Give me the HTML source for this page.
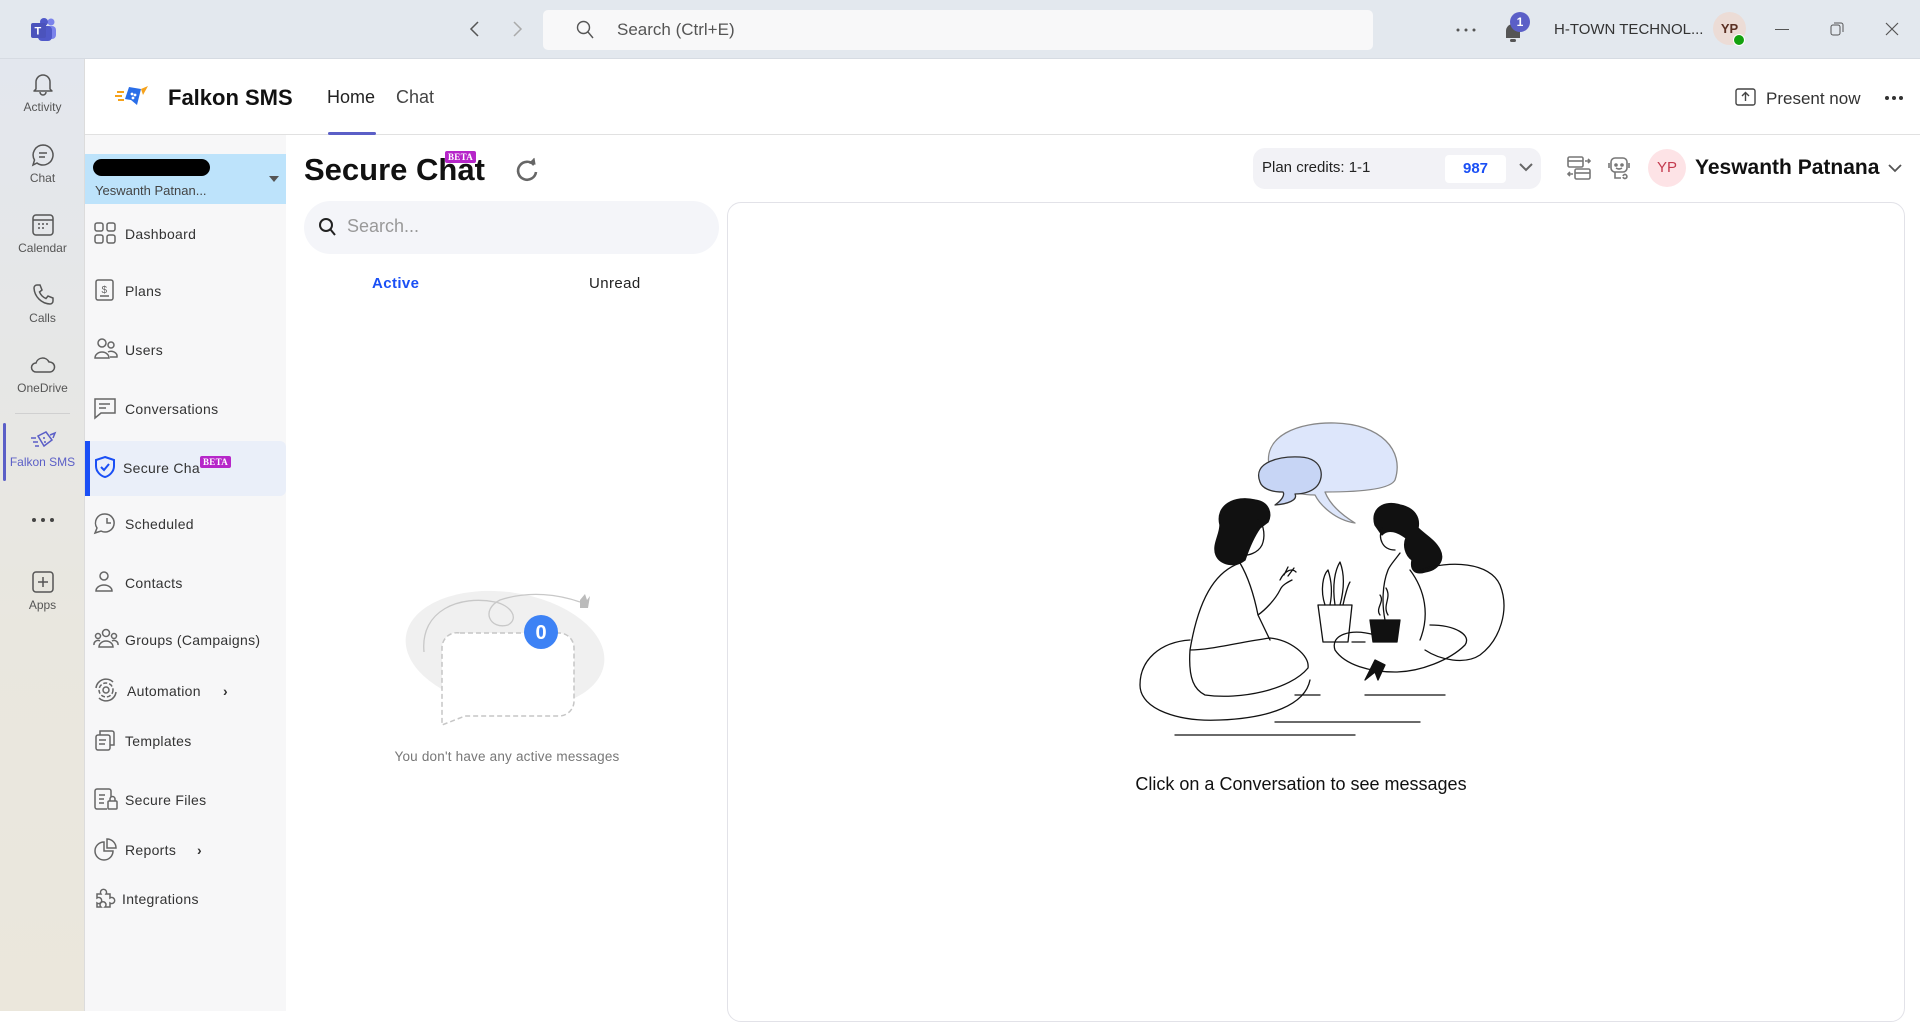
<!DOCTYPE html>
<html><head><meta charset="utf-8">
<style>
*{box-sizing:border-box;margin:0;padding:0}
body{width:1920px;height:1011px;overflow:hidden;font-family:"Liberation Sans",sans-serif;background:#fff;position:relative;color:#222}
.abs{position:absolute}
#top{left:0;top:0;width:1920px;height:59px;background:#e3e8ee;border-bottom:1px solid #d6dbe2}
#rail{left:0;top:59px;width:85px;height:952px;background:linear-gradient(#e3e7ee,#e9e7df 60%,#ebe7dc);border-right:1px solid #dcdcdc}
.ri{position:absolute;left:0;width:85px;text-align:center;font-size:12px;color:#555}
.ri svg{display:block;margin:0 auto 3px}
#hdr{left:85px;top:59px;width:1835px;height:76px;background:#fff;border-bottom:1px solid #e1e1e1}
#side{left:85px;top:135px;width:201px;height:876px;background:#f7f7f8}
.mi{position:absolute;left:0;width:201px;height:30px;font-size:14px;color:#333;letter-spacing:.3px}
.mi svg{position:absolute;left:8px;top:2px}
.mi span{position:absolute;left:40px;top:7px}
#panel{left:727px;top:202px;width:1178px;height:820px;border:1px solid #e2e2e8;border-radius:14px;background:#fff}
.beta{background:#b626c9;color:#fff;font-family:"Liberation Serif",serif;font-weight:bold;font-size:9px;border-radius:2px;padding:1px 3px;letter-spacing:.3px}
</style></head><body>

<div id="top" class="abs">
  <svg class="abs" style="left:30px;top:17px" width="28" height="26" viewBox="0 0 28 26"><circle cx="21" cy="5" r="3.5" fill="#7b83eb"/><rect x="14" y="9" width="12" height="13" rx="4" fill="#7b83eb"/><circle cx="14" cy="5" r="4" fill="#5059c9"/><rect x="8" y="9" width="14" height="15" rx="4" fill="#5059c9"/><rect x="1" y="6" width="15" height="15" rx="2" fill="#4b53bc"/><text x="4.5" y="17.5" font-size="11" font-weight="bold" fill="#fff" font-family="Liberation Sans">T</text></svg>
  <svg class="abs" style="left:468px;top:20px" width="14" height="18"><path d="M10 2 L3 9 L10 16" stroke="#555" stroke-width="1.5" fill="none"/></svg>
  <svg class="abs" style="left:510px;top:20px" width="14" height="18"><path d="M4 2 L11 9 L4 16" stroke="#aaa" stroke-width="1.5" fill="none"/></svg>
  <div class="abs" style="left:543px;top:10px;width:830px;height:40px;background:#f8f8f9;border-radius:5px"></div>
  <svg class="abs" style="left:576px;top:20px" width="18" height="20"><circle cx="7.5" cy="7.5" r="6" stroke="#555" stroke-width="1.4" fill="none"/><path d="M12 12 L17 18" stroke="#555" stroke-width="1.4"/></svg>
  <div class="abs" style="left:617px;top:20px;font-size:17px;color:#555">Search (Ctrl+E)</div>
  <svg class="abs" style="left:1455px;top:27px" width="22" height="6"><circle cx="3" cy="3" r="1.5" fill="#555"/><circle cx="11" cy="3" r="1.5" fill="#555"/><circle cx="19" cy="3" r="1.5" fill="#555"/></svg>
  <svg class="abs" style="left:1502px;top:20px" width="22" height="24"><path d="M4 18 L4 11 A7 7 0 0 1 18 11 L18 18 Z" fill="#555"/><rect x="8" y="19" width="6" height="3" rx="1.5" fill="#555"/></svg>
  <div class="abs" style="left:1510px;top:12px;width:20px;height:20px;border-radius:50%;background:#5b5fc7;color:#fff;font-size:12px;font-weight:bold;text-align:center;line-height:20px">1</div>
  <div class="abs" style="left:1554px;top:21px;font-size:15px;color:#333">H-TOWN TECHNOL...</div>
  <div class="abs" style="left:1713px;top:12px;width:33px;height:33px;border-radius:50%;background:#ecdcd6;color:#5a2f22;font-size:13px;font-weight:bold;text-align:center;line-height:33px">YP</div>
  <div class="abs" style="left:1733px;top:34px;width:12px;height:12px;border-radius:50%;background:#13a10e;border:1.5px solid #fff"></div>
  <div class="abs" style="left:1775px;top:29px;width:14px;height:1px;background:#555"></div>
  <svg class="abs" style="left:1830px;top:22px" width="14" height="14"><rect x="1" y="3" width="9" height="10" rx="2" stroke="#555" fill="none"/><path d="M4 1 H11 A2 2 0 0 1 13 3 V10" stroke="#555" fill="none"/></svg>
  <svg class="abs" style="left:1885px;top:22px" width="14" height="14"><path d="M1 1 L13 13 M13 1 L1 13" stroke="#555" stroke-width="1.2"/></svg>
</div>

<div id="rail" class="abs">
  <div class="ri" style="top:12px"><svg width="26" height="26" viewBox="0 0 26 26"><path d="M6 18 V11 A7 7 0 0 1 20 11 V18 L22 20 H4 Z" stroke="#555" stroke-width="1.5" fill="none" stroke-linejoin="round"/><path d="M10 21 A3 3 0 0 0 16 21" stroke="#555" stroke-width="1.5" fill="none"/></svg>Activity</div>
  <div class="ri" style="top:83px"><svg width="26" height="26" viewBox="0 0 26 26"><path d="M13 3 A10 10 0 1 1 7 21 L3 23 L4.5 18 A10 10 0 0 1 13 3 Z" stroke="#555" stroke-width="1.5" fill="none"/><path d="M9 11 H17 M9 15 H15" stroke="#555" stroke-width="1.5"/></svg>Chat</div>
  <div class="ri" style="top:153px"><svg width="26" height="26" viewBox="0 0 26 26"><rect x="3" y="3" width="20" height="20" rx="3" stroke="#555" stroke-width="1.5" fill="none"/><path d="M3 8 H23" stroke="#555" stroke-width="1.5"/><g fill="#555"><circle cx="9" cy="12" r="1"/><circle cx="13" cy="12" r="1"/><circle cx="17" cy="12" r="1"/><circle cx="9" cy="16" r="1"/><circle cx="13" cy="16" r="1"/></g></svg>Calendar</div>
  <div class="ri" style="top:223px"><svg width="26" height="26" viewBox="0 0 26 26"><path d="M7 3 L10 3 L12 8 L9.5 10 A12 12 0 0 0 16 16.5 L18 14 L23 16 L23 19 A3 3 0 0 1 20 22 A17 17 0 0 1 4 6 A3 3 0 0 1 7 3 Z" stroke="#555" stroke-width="1.5" fill="none"/></svg>Calls</div>
  <div class="ri" style="top:293px"><svg width="26" height="26" viewBox="0 0 26 26"><path d="M6 20 A4.5 4.5 0 0 1 6 11 A7 7 0 0 1 19 10 A5 5 0 0 1 20 20 Z" stroke="#555" stroke-width="1.5" fill="none"/></svg>OneDrive</div>
  <div class="abs" style="left:15px;top:354px;width:55px;height:1px;background:#d0d0d0"></div>
  <div class="abs" style="left:3px;top:364px;width:3px;height:58px;background:#5b5fc7;border-radius:2px"></div>
  <div class="ri" style="top:369px;color:#5b5fc7"><svg width="28" height="24" viewBox="0 0 28 24"><path d="M9 8 L17 4 L23 12 L15 18 Z" stroke="#5b5fc7" stroke-width="1.5" fill="none"/><path d="M21 7 L26 5 L24 10" stroke="#5b5fc7" stroke-width="1.5" fill="none"/><path d="M2 10 H7 M4 14 H9 M6 18 H10" stroke="#5b5fc7" stroke-width="1.5"/><circle cx="15" cy="10" r="1" fill="#5b5fc7"/><circle cx="16" cy="14" r="1" fill="#5b5fc7"/></svg>Falkon SMS</div>
  <svg class="abs" style="left:31px;top:458px" width="24" height="6"><circle cx="3" cy="3" r="2" fill="#444"/><circle cx="12" cy="3" r="2" fill="#444"/><circle cx="21" cy="3" r="2" fill="#444"/></svg>
  <div class="ri" style="top:510px"><svg width="26" height="26" viewBox="0 0 26 26"><rect x="3" y="3" width="20" height="20" rx="3" stroke="#555" stroke-width="1.5" fill="none"/><path d="M13 8 V18 M8 13 H18" stroke="#555" stroke-width="1.5"/></svg>Apps</div>
</div>

<div id="hdr" class="abs">
  <svg class="abs" style="left:30px;top:24px" width="36" height="26" viewBox="0 0 36 26"><path d="M14 4 L26 6 L22 22 L16 17 L10 16 Z" fill="#2a6ee8"/><path d="M26 6 L33 3 L28 12 Z" fill="#f6a21b"/><path d="M2 9 H9 M0 13 H7 M3 17 H9" stroke="#f6a21b" stroke-width="2"/><circle cx="17" cy="11" r="1.4" fill="#fff"/><circle cx="20" cy="12" r="1.4" fill="#fff"/><circle cx="18" cy="15" r="1.4" fill="#fff"/></svg>
  <div class="abs" style="left:83px;top:26px;font-size:22px;font-weight:bold;color:#111">Falkon SMS</div>
  <div class="abs" style="left:242px;top:28px;font-size:18px;color:#222">Home</div>
  <div class="abs" style="left:243px;top:73px;width:48px;height:3px;background:#5b5fc7;border-radius:2px"></div>
  <div class="abs" style="left:311px;top:28px;font-size:18px;color:#444">Chat</div>
  <svg class="abs" style="left:1650px;top:29px" width="22" height="20"><rect x="1" y="1" width="19" height="16" rx="2" stroke="#444" stroke-width="1.4" fill="none"/><path d="M10.5 13 V5 M7 8 L10.5 4.5 L14 8" stroke="#444" stroke-width="1.4" fill="none"/></svg>
  <div class="abs" style="left:1681px;top:30px;font-size:17px;color:#333">Present now</div>
  <svg class="abs" style="left:1799px;top:36px" width="20" height="6"><circle cx="3" cy="3" r="2" fill="#333"/><circle cx="10" cy="3" r="2" fill="#333"/><circle cx="17" cy="3" r="2" fill="#333"/></svg>
</div>

<div id="side" class="abs">
  <div class="abs" style="left:0;top:19px;width:201px;height:50px;background:#bde3fb"></div>
  <div class="abs" style="left:8px;top:24px;width:117px;height:17px;background:#000;border-radius:9px"></div>
  <div class="abs" style="left:10px;top:48px;font-size:13px;color:#444">Yeswanth Patnan...</div>
  <div class="abs" style="left:184px;top:41px;width:0;height:0;border-left:5px solid transparent;border-right:5px solid transparent;border-top:6px solid #555"></div>

  <div class="mi" style="top:84px"><svg width="24" height="24" viewBox="0 0 24 24" fill="none" stroke="#666" stroke-width="1.5"><rect x="2" y="2" width="8" height="8" rx="2"/><rect x="14" y="2" width="8" height="8" rx="2"/><rect x="2" y="14" width="8" height="8" rx="2"/><rect x="14" y="14" width="8" height="8" rx="2"/></svg><span>Dashboard</span></div>
  <div class="mi" style="top:141px"><svg width="24" height="24" viewBox="0 0 24 24" fill="none" stroke="#666" stroke-width="1.5"><rect x="3" y="2" width="17" height="20" rx="2"/><text x="8.5" y="15" font-size="10" fill="#666" stroke="none">$</text><path d="M7 18 H16"/></svg><span>Plans</span></div>
  <div class="mi" style="top:200px"><svg width="26" height="24" viewBox="0 0 26 24" fill="none" stroke="#666" stroke-width="1.5"><circle cx="9" cy="6" r="4"/><path d="M2 21 A7 6 0 0 1 16 21 Z"/><circle cx="18" cy="8" r="3"/><path d="M15 15 A6 5 0 0 1 24 20 H17"/></svg><span>Users</span></div>
  <div class="mi" style="top:259px"><svg width="24" height="24" viewBox="0 0 24 24" fill="none" stroke="#666" stroke-width="1.5"><path d="M2 3 H22 V17 H8 L2 22 Z"/><path d="M6 8 H17 M6 12 H13"/></svg><span>Conversations</span></div>
  <div class="abs" style="left:0;top:306px;width:201px;height:55px;background:#eaeff9;border-radius:0 6px 6px 0"></div>
  <div class="abs" style="left:0;top:306px;width:5px;height:55px;background:#1a4ff5"></div>
  <div class="mi" style="top:318px"><svg width="24" height="24" viewBox="0 0 24 24" fill="none" stroke="#1a4ff5" stroke-width="2"><path d="M12 2 L21 5 V11 C21 17 16 21 12 22 C8 21 3 17 3 11 V5 Z"/><path d="M8 12 L11 15 L16 9"/></svg><span style="left:38px">Secure Cha</span></div>
  <div class="abs beta" style="left:115px;top:321px">BETA</div>
  <div class="mi" style="top:374px"><svg width="26" height="24" viewBox="0 0 26 24" fill="none" stroke="#666" stroke-width="1.5"><path d="M12 3 A9 9 0 1 1 8 20 L2 22 L4 17 A9 9 0 0 1 12 3 Z"/><path d="M14 7 V12 H18"/></svg><span>Scheduled</span></div>
  <div class="mi" style="top:433px"><svg width="24" height="24" viewBox="0 0 24 24" fill="none" stroke="#666" stroke-width="1.5"><circle cx="11" cy="6" r="4"/><path d="M3 21 A8 6 0 0 1 19 21 Z"/></svg><span>Contacts</span></div>
  <div class="mi" style="top:490px"><svg width="26" height="24" viewBox="0 0 26 24" fill="none" stroke="#666" stroke-width="1.5"><circle cx="13" cy="6" r="3.5"/><circle cx="5" cy="9" r="2.5"/><circle cx="21" cy="9" r="2.5"/><path d="M6 20 A7 6 0 0 1 20 20 Z M1 18 A4 4 0 0 1 7 14 M25 18 A4 4 0 0 0 19 14"/></svg><span>Groups (Campaigns)</span></div>
  <div class="mi" style="top:541px"><svg width="26" height="24" viewBox="0 0 26 24" fill="none" stroke="#666" stroke-width="1.5"><circle cx="13" cy="12" r="3"/><circle cx="13" cy="12" r="7" stroke-dasharray="4 2"/><path d="M3 10 A10 10 0 0 1 20 4 M23 14 A10 10 0 0 1 6 20"/></svg><span style="left:42px">Automation</span><span style="left:138px;font-weight:bold">›</span></div>
  <div class="mi" style="top:591px"><svg width="24" height="24" viewBox="0 0 24 24" fill="none" stroke="#666" stroke-width="1.5"><rect x="3" y="7" width="14" height="15" rx="2"/><path d="M7 7 V3 H19 A2 2 0 0 1 21 5 V17 H17 M6 12 H13 M6 16 H12"/></svg><span>Templates</span></div>
  <div class="mi" style="top:650px"><svg width="26" height="24" viewBox="0 0 26 24" fill="none" stroke="#666" stroke-width="1.5"><path d="M14 22 H4 A2 2 0 0 1 2 20 V4 A2 2 0 0 1 4 2 H16 A2 2 0 0 1 18 4 V10"/><path d="M6 8 H12 M6 12 H11 M6 16 H11"/><rect x="15" y="14" width="9" height="8" rx="1"/><path d="M17 14 V12 A2.5 2.5 0 0 1 22 12 V14"/></svg><span>Secure Files</span></div>
  <div class="mi" style="top:700px"><svg width="26" height="24" viewBox="0 0 26 24" fill="none" stroke="#666" stroke-width="1.5"><path d="M11 5 A9 9 0 1 0 20 14 H11 Z"/><path d="M14 2 A9 9 0 0 1 23 11 H14 Z"/></svg><span>Reports</span><span style="left:112px;font-weight:bold">›</span></div>
  <div class="mi" style="top:749px"><svg width="24" height="24" viewBox="0 0 24 24" fill="none" stroke="#666" stroke-width="1.5"><path d="M4 8 H8 A3 3 0 1 1 13 8 H17 V12 A3 3 0 1 1 17 17 V21 H12 A3 3 0 1 0 8 21 H4 V17 A3 3 0 1 0 4 12 Z"/></svg><span style="left:37px">Integrations</span></div>
</div>

<div class="abs" style="left:304px;top:152px;font-size:31px;font-weight:bold;color:#111">Secure Chat</div>
<div class="abs beta" style="left:445px;top:151px;font-size:9px">BETA</div>
<svg class="abs" style="left:513px;top:157px" width="28" height="28" viewBox="0 0 28 28" fill="none" stroke="#666" stroke-width="2.6"><path d="M21 8 A9 9 0 1 0 23 15"/><path d="M16 6 L22 7 L21 1" fill="#666" stroke-width="1"/></svg>
<div class="abs" style="left:304px;top:201px;width:415px;height:53px;background:#f4f5f9;border-radius:27px"></div>
<svg class="abs" style="left:318px;top:217px" width="20" height="22"><circle cx="8" cy="8" r="6" stroke="#222" stroke-width="2" fill="none"/><path d="M12.5 12.5 L17 18" stroke="#222" stroke-width="2"/></svg>
<div class="abs" style="left:347px;top:216px;font-size:18px;color:#999">Search...</div>
<div class="abs" style="left:372px;top:275px;font-size:15px;font-weight:bold;color:#1a4ff5;letter-spacing:.4px">Active</div>
<div class="abs" style="left:589px;top:275px;font-size:15px;color:#222;letter-spacing:.4px">Unread</div>

<svg class="abs" style="left:380px;top:570px" width="260" height="200" viewBox="0 0 260 200">
  <ellipse cx="125" cy="80" rx="100" ry="58" fill="#f0f0f0" transform="rotate(8 125 80)"/>
  <path d="M44 82 C40 40 80 25 115 32 C130 35 140 48 128 55 C110 60 100 40 120 30 C150 20 180 25 200 32" stroke="#c8c8c8" stroke-width="1.3" fill="none"/>
  <path d="M200 30 L205 24 L207 30 L210 26 L208 38 L200 38 Z" fill="#bbb"/>
  <path d="M80 63 H178 A15 15 0 0 1 194 78 V130 A15 15 0 0 1 178 146 H85 L62 155 V78 A15 15 0 0 1 80 63 Z" fill="#fff" stroke="#c6c6c6" stroke-width="1.5" stroke-dasharray="5 3"/>
  <circle cx="161" cy="62" r="17" fill="#3d82f5"/>
  <text x="161" y="69" text-anchor="middle" font-size="20" font-weight="bold" fill="#fff" font-family="Liberation Sans">0</text>
</svg>
<div class="abs" style="left:382px;top:749px;width:250px;text-align:center;font-size:13.5px;color:#777;letter-spacing:.2px">You don't have any active messages</div>

<div class="abs" style="left:1253px;top:148px;width:288px;height:41px;background:#f2f2f6;border-radius:12px"></div>
<div class="abs" style="left:1262px;top:159px;font-size:15px;color:#222">Plan credits: 1-1</div>
<div class="abs" style="left:1445px;top:155px;width:61px;height:28px;background:#fff;border-radius:4px;text-align:center;line-height:28px;font-size:15px;font-weight:bold;color:#1a4ff5">987</div>
<svg class="abs" style="left:1518px;top:161px" width="16" height="12"><path d="M2 3 L8 9 L14 3" stroke="#666" stroke-width="2" fill="none"/></svg>
<svg class="abs" style="left:1566px;top:155px" width="26" height="26" viewBox="0 0 26 26" fill="none" stroke="#777" stroke-width="1.6"><rect x="2" y="2" width="15" height="10" rx="1.5"/><path d="M2 6 H17"/><rect x="9" y="14" width="15" height="10" rx="1.5"/><path d="M9 18 H24"/><path d="M19 6 H24 M22 4 L24 6 L22 8 M7 19 H2 M4 17 L2 19 L4 21"/></svg>
<svg class="abs" style="left:1607px;top:155px" width="24" height="26" viewBox="0 0 24 26" fill="none" stroke="#777" stroke-width="1.6"><rect x="4" y="3" width="16" height="14" rx="4"/><circle cx="9" cy="10" r="1" fill="#777"/><circle cx="15" cy="10" r="1" fill="#777"/><path d="M9 13 Q12 15 15 13 M2 8 V13 M22 8 V13 M8 17 V23 H14 M16 21 A2 2 0 1 1 16 22"/></svg>
<div class="abs" style="left:1648px;top:149px;width:38px;height:38px;border-radius:50%;background:#fde3e6;color:#c33a4e;font-size:15px;text-align:center;line-height:38px">YP</div>
<div class="abs" style="left:1695px;top:156px;font-size:21px;font-weight:bold;color:#111">Yeswanth Patnana</div>
<svg class="abs" style="left:1887px;top:162px" width="16" height="12"><path d="M2 3 L8 9 L14 3" stroke="#555" stroke-width="1.8" fill="none"/></svg>

<div id="panel" class="abs"></div>

<svg class="abs" style="left:1120px;top:410px" width="400" height="340" viewBox="0 0 400 340" fill="none" stroke="#111" stroke-width="1.3" stroke-linejoin="round" stroke-linecap="round">
  <path d="M150 60 C140 25 180 12 215 13 C260 14 285 40 275 70 C270 80 235 82 205 82 C210 95 222 105 235 113 C215 110 200 95 195 85 C170 85 155 75 150 60 Z" fill="#dde6fb" stroke="#888"/>
  <path d="M140 72 C132 52 160 46 180 47 C205 48 205 70 195 78 C190 82 183 84 175 84 C178 90 168 94 155 95 C162 90 165 85 163 82 C150 82 142 78 140 72 Z" fill="#c7d5f5" stroke="#333"/>
  <path d="M100 115 C95 95 115 85 135 90 C150 92 152 105 148 112 L140 118 C135 125 130 135 125 150 C115 158 100 155 96 145 C92 135 100 125 100 115 Z" fill="#111"/>
  <path d="M138 110 C145 115 145 128 142 135 C138 143 128 146 122 145" stroke="#111"/>
  <path d="M120 153 C100 160 80 180 70 240 M120 153 C130 170 135 190 138 205 C145 200 155 190 160 180 C162 175 168 172 172 170 M138 205 L150 230 M70 240 C68 270 75 280 85 285 C120 290 170 280 188 258 C190 245 170 230 150 228 C120 232 90 240 70 240"/>
  <path d="M160 170 C165 160 172 158 176 162 M164 165 L168 157 M168 166 L174 158"/>
  <path d="M70 230 C40 232 20 250 20 275 C20 300 60 312 100 310 C150 308 185 295 190 270"/>
  <path d="M198 195 L232 195 L228 232 L203 232 Z"/>
  <path d="M205 195 C200 180 203 165 208 160 C212 172 212 185 210 195 M215 195 C212 175 215 160 220 152 C225 165 224 180 220 195 M223 195 C225 185 228 175 230 172"/>
  <path d="M255 115 C250 98 265 90 280 95 C295 98 300 108 298 118 C305 125 315 130 320 140 C325 150 318 160 305 162 C295 165 290 160 292 150 C285 145 283 135 286 128 C278 122 268 118 262 125 Z" fill="#111"/>
  <path d="M262 118 C258 128 262 140 275 140 M280 143 C275 150 270 155 268 160 C262 175 262 195 265 210"/>
  <path d="M290 160 C305 180 310 205 300 230 M255 225 C230 218 210 225 215 240 C225 255 250 262 275 262 C300 262 330 250 345 235 C352 225 335 215 310 215"/>
  <path d="M250 210 L280 210 L277 232 L253 232 Z" fill="#111"/>
  <path d="M260 205 C255 198 265 192 260 185 M268 205 C262 195 272 188 266 178"/>
  <path d="M255 250 L245 270 L255 262 L258 270 L265 255 Z" fill="#111"/>
  <path d="M300 160 C330 150 370 152 380 175 C390 200 380 230 360 245 C345 255 320 250 305 240"/>
  <path d="M175 285 H200 M245 285 H325 M155 312 H300 M55 325 H235 M232 232 H245"/>
</svg>
<div class="abs" style="left:1100px;top:774px;width:402px;text-align:center;font-size:18px;color:#111">Click on a Conversation to see messages</div>

</body></html>
